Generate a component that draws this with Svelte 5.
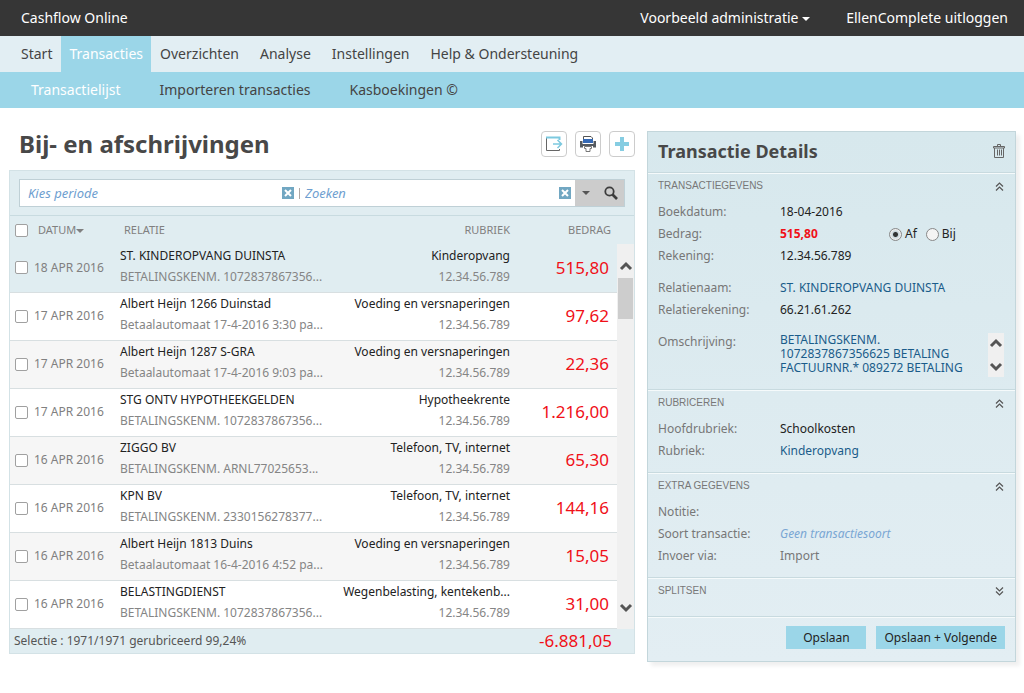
<script>
	let menu = ['Start', 'Transacties', 'Overzichten', 'Analyse', 'Instellingen', 'Help & Ondersteuning'];
	let submenu = ['Transactielijst', 'Importeren transacties', 'Kasboekingen ©'];
	let active = 'Transacties';
	let activeSub = 'Transactielijst';

	let periode = '';
	let zoek = '';
	let richting = 'af';
	let selected = 0;

	let rekening = '12.34.56.789';
	let transacties = [
		{ datum: '18 APR 2016', relatie: 'ST. KINDEROPVANG DUINSTA', tekst: 'BETALINGSKENM. 1072837867356...', rubriek: 'Kinderopvang', bedrag: '515,80' },
		{ datum: '17 APR 2016', relatie: 'Albert Heijn 1266 Duinstad', tekst: 'Betaalautomaat 17-4-2016 3:30 pa...', rubriek: 'Voeding en versnaperingen', bedrag: '97,62' },
		{ datum: '17 APR 2016', relatie: 'Albert Heijn 1287 S-GRA', tekst: 'Betaalautomaat 17-4-2016 9:03 pa...', rubriek: 'Voeding en versnaperingen', bedrag: '22,36' },
		{ datum: '17 APR 2016', relatie: 'STG ONTV HYPOTHEEKGELDEN', tekst: 'BETALINGSKENM. 1072837867356...', rubriek: 'Hypotheekrente', bedrag: '1.216,00' },
		{ datum: '16 APR 2016', relatie: 'ZIGGO BV', tekst: 'BETALINGSKENM. ARNL77025653...', rubriek: 'Telefoon, TV, internet', bedrag: '65,30' },
		{ datum: '16 APR 2016', relatie: 'KPN BV', tekst: 'BETALINGSKENM. 2330156278377...', rubriek: 'Telefoon, TV, internet', bedrag: '144,16' },
		{ datum: '16 APR 2016', relatie: 'Albert Heijn 1813 Duins', tekst: 'Betaalautomaat 16-4-2016 4:52 pa...', rubriek: 'Voeding en versnaperingen', bedrag: '15,05' },
		{ datum: '16 APR 2016', relatie: 'BELASTINGDIENST', tekst: 'BETALINGSKENM. 1072837867356...', rubriek: 'Wegenbelasting, kentekenb...', bedrag: '31,00' }
	];
</script>

<header class="topbar">
	<a href="/">Cashflow Online</a>
	<div class="account">
		<button type="button">Voorbeeld administratie <span class="caret"></span></button>
		<a href="/uitloggen">EllenComplete uitloggen</a>
	</div>
</header>
<nav class="menu">
	{#each menu as item}
		<a href="/" class:active={item === active}>{item}</a>
	{/each}
</nav>
<nav class="submenu">
	{#each submenu as item}
		<a href="/" class:active={item === activeSub}>{item}</a>
	{/each}
</nav>

<main>
	<section class="list">
		<div class="title">
			<h1>Bij- en afschrijvingen</h1>
			<button type="button" class="tool" aria-label="Exporteren">
				<svg width="18" height="18" viewBox="0 0 18 18" fill="none">
					<path d="M1.500 3v12.500H14.500V14" stroke="#666" />
					<path d="M1 2.500H14.500V5" stroke="#7cc9df" stroke-width="2" />
					<path d="M8 9h8M12.500 5 16.500 9 12.500 13" stroke="#7cc9df" stroke-width="1.500" />
				</svg>
			</button>
			<button type="button" class="tool" aria-label="Printen">
				<svg width="18" height="18" viewBox="0 0 18 18">
					<path d="M4.500 5V1.500h7.500l1.500 1.500v2" fill="#fff" stroke="#555" />
					<path d="M1 6h2.500v3h11V6H17v6.500h-3V11H4v1.500H1z" fill="#555a60" />
					<path d="M4 4h10v4H4z" fill="#3569b5" />
					<path d="M5.500 11.500h7v2h-1.500v3h-4v-3H5.500z" fill="#fff" stroke="#777" />
				</svg>
			</button>
			<button type="button" class="tool" aria-label="Toevoegen">
				<svg width="18" height="18" viewBox="0 0 18 18">
					<path d="M7 2h4v5h5v4h-5v5H7v-5H2V7h5z" fill="#86cde2" />
				</svg>
			</button>
		</div>

		<div class="panel">
			<form class="filter" on:submit|preventDefault>
				<div class="search">
					<input class="periode" type="text" bind:value={periode} placeholder="Kies periode" aria-label="Kies periode" />
					<button type="button" class="clear" aria-label="Periode wissen" on:click={() => (periode = '')}>
						<svg width="12" height="12" viewBox="0 0 12 12"><path d="M3 3l6 6M9 3l-6 6" stroke="#fff" stroke-width="2" /></svg>
					</button>
					<span class="sep"></span>
					<input class="zoek" type="text" bind:value={zoek} placeholder="Zoeken" aria-label="Zoeken" />
					<button type="button" class="clear" aria-label="Zoekterm wissen" on:click={() => (zoek = '')}>
						<svg width="12" height="12" viewBox="0 0 12 12"><path d="M3 3l6 6M9 3l-6 6" stroke="#fff" stroke-width="2" /></svg>
					</button>
					<button type="button" class="grey" aria-label="Zoekopties"><span class="caret"></span></button>
					<button type="submit" class="grey wide" aria-label="Zoek">
						<svg width="14" height="14" viewBox="0 0 14 14" fill="none" stroke="#3c3c3c">
							<circle cx="5.500" cy="5.500" r="4.200" stroke-width="1.800" />
							<path d="M8.500 8.500 13 13" stroke-width="2.600" />
						</svg>
					</button>
				</div>
			</form>

			<div class="scroller">
				<table>
					<thead>
						<tr>
							<th class="check"><input type="checkbox" aria-label="Alles selecteren" /></th>
							<th class="datum">DATUM<span class="caret"></span></th>
							<th class="relatie">RELATIE</th>
							<th class="rubriek">RUBRIEK</th>
							<th class="bedrag">BEDRAG</th>
						</tr>
					</thead>
					<tbody>
						{#each transacties as t, i}
							<tr class:selected={i === selected} on:click={() => (selected = i)}>
								<td class="check"><input type="checkbox" aria-label="Selecteer {t.relatie}" /></td>
								<td class="datum">{t.datum}</td>
								<td class="relatie"><div>{t.relatie}</div><div class="sub">{t.tekst}</div></td>
								<td class="rubriek"><div>{t.rubriek}</div><div class="sub">{rekening}</div></td>
								<td class="bedrag">{t.bedrag}</td>
							</tr>
						{/each}
					</tbody>
				</table>
				<div class="scrollbar">
					<svg width="14" height="10" viewBox="0 0 14 10"><path d="M2 8l5-5 5 5" fill="none" stroke="#555" stroke-width="3" /></svg>
					<div class="thumb"></div>
					<svg width="14" height="10" viewBox="0 0 14 10"><path d="M2 2l5 5 5-5" fill="none" stroke="#555" stroke-width="3" /></svg>
				</div>
			</div>

			<div class="totals">
				<span>Selectie : 1971/1971 gerubriceerd 99,24%</span>
				<strong>-6.881,05</strong>
			</div>
		</div>
	</section>

	<aside class="details">
		<div class="head">
			<h2>Transactie Details</h2>
			<button type="button" class="plain" aria-label="Verwijderen">
				<svg width="12" height="14" viewBox="0 0 12 14" fill="none" stroke="#666">
					<path d="M4.500 2V.5h3V2M.5 2.500h11v1.500H.5zM1.500 4v9.500h9V4M4.500 5.500v6M6.500 5.500v6M8.500 5.500v6" />
				</svg>
			</button>
		</div>

		<section>
			<h3>TRANSACTIEGEVENS
				<button type="button" class="plain" aria-label="Inklappen"><svg width="9" height="9" viewBox="0 0 9 9"><path d="M1 4.500 4.500 1 8 4.500M1 8.500 4.500 5 8 8.500" fill="none" stroke="#555" stroke-width="1.200" /></svg></button>
			</h3>
			<dl>
				<dt>Boekdatum:</dt><dd>18-04-2016</dd>
				<dt>Bedrag:</dt>
				<dd class="amount">
					<span class="red">515,80</span>
					<label><input type="radio" value="af" bind:group={richting} />Af</label>
					<label><input type="radio" value="bij" bind:group={richting} />Bij</label>
				</dd>
				<dt>Rekening:</dt><dd>12.34.56.789</dd>
			</dl>
			<dl>
				<dt>Relatienaam:</dt><dd class="blue">ST. KINDEROPVANG DUINSTA</dd>
				<dt>Relatierekening:</dt><dd>66.21.61.262</dd>
			</dl>
			<dl>
				<dt>Omschrijving:</dt>
				<dd class="blue memo">
					<div>BETALINGSKENM.<br />1072837867356625 BETALING<br />FACTUURNR.* 089272 BETALING</div>
					<div class="spin">
						<svg width="14" height="10" viewBox="0 0 14 10"><path d="M2 8l5-5 5 5" fill="none" stroke="#555" stroke-width="3" /></svg>
						<svg width="14" height="10" viewBox="0 0 14 10"><path d="M2 2l5 5 5-5" fill="none" stroke="#555" stroke-width="3" /></svg>
					</div>
				</dd>
			</dl>
		</section>

		<section>
			<h3>RUBRICEREN
				<button type="button" class="plain" aria-label="Inklappen"><svg width="9" height="9" viewBox="0 0 9 9"><path d="M1 4.500 4.500 1 8 4.500M1 8.500 4.500 5 8 8.500" fill="none" stroke="#555" stroke-width="1.200" /></svg></button>
			</h3>
			<dl>
				<dt>Hoofdrubriek:</dt><dd>Schoolkosten</dd>
				<dt>Rubriek:</dt><dd class="blue">Kinderopvang</dd>
			</dl>
		</section>

		<section>
			<h3>EXTRA GEGEVENS
				<button type="button" class="plain" aria-label="Inklappen"><svg width="9" height="9" viewBox="0 0 9 9"><path d="M1 4.500 4.500 1 8 4.500M1 8.500 4.500 5 8 8.500" fill="none" stroke="#555" stroke-width="1.200" /></svg></button>
			</h3>
			<dl>
				<dt>Notitie:</dt><dd></dd>
				<dt>Soort transactie:</dt><dd class="empty">Geen transactiesoort</dd>
				<dt>Invoer via:</dt><dd class="muted">Import</dd>
			</dl>
		</section>

		<section class="closed">
			<h3>SPLITSEN
				<button type="button" class="plain" aria-label="Uitklappen"><svg width="9" height="9" viewBox="0 0 9 9"><path d="M1 .5 4.500 4 8 .5M1 4.500 4.500 8 8 4.500" fill="none" stroke="#555" stroke-width="1.200" /></svg></button>
			</h3>
		</section>

		<div class="actions">
			<button type="button">Opslaan</button>
			<button type="button">Opslaan + Volgende</button>
		</div>
	</aside>
</main>

<style>
	:global(body) {
		background: #fff;
		color: #222;
		font: 12px/20px 'Noto Sans', 'Open Sans', sans-serif;
	}
	a {
		color: inherit;
		text-decoration: none;
	}
	button {
		border: 0;
		padding: 0;
		background: none;
		color: inherit;
		font: inherit;
		cursor: pointer;
	}
	svg {
		display: block;
	}
	.caret {
		display: inline-block;
		border: 4px solid transparent;
		border-top-color: currentColor;
		border-bottom: 0;
		vertical-align: middle;
	}
	.topbar {
		display: flex;
		align-items: center;
		justify-content: space-between;
		height: 36px;
		padding: 0 16px 0 21px;
		background: #363636;
		color: #fff;
		font-size: 14px;
	}
	.account {
		display: flex;
		gap: 36px;
	}
	.menu,
	.submenu {
		display: flex;
		height: 36px;
		color: #444;
		font-size: 14px;
		line-height: 36px;
	}
	.menu {
		gap: 5px;
		padding-left: 13px;
		background: #e2eef3;
	}
	.menu a {
		padding: 0 8px;
	}
	.submenu {
		gap: 39px;
		padding-left: 31px;
		background: #9bd6e8;
	}
	.menu .active,
	.submenu .active {
		background: #9bd6e8;
		color: #fff;
	}
	.menu .active {
		margin: 0 -4px;
	}
	main {
		display: grid;
		grid-template-columns: 626fr 369fr;
		gap: 12px;
		align-items: start;
		padding: 23px 8px 24px 9px;
	}
	.title {
		display: flex;
		align-items: center;
		gap: 8px;
		height: 26px;
		margin-bottom: 13px;
	}
	h1 {
		flex: 1;
		margin: 0 0 0 10px;
		color: #484848;
		font-size: 24px;
		line-height: 26px;
	}
	.tool {
		display: grid;
		place-items: center;
		width: 26px;
		height: 26px;
		border: 1px solid #ccc;
		border-radius: 4px;
		background: #fff;
	}
	.panel {
		border: 1px solid #d3e2e6;
		background: #e0edf1;
	}
	.filter {
		padding: 8px 9px;
		border-bottom: 1px solid #c8dbe0;
	}
	.search {
		display: flex;
		align-items: center;
		height: 26px;
		border: 1px solid #bfd0d6;
		background: #fff;
	}
	.search input {
		box-sizing: border-box;
		min-width: 0;
		height: 24px;
		border: 0;
		padding: 0 0 0 8px;
		outline: none;
		background: none;
		font: italic 13px 'Noto Sans', 'Open Sans', sans-serif;
	}
	.search .periode,
	.search .zoek {
		flex: 1;
	}
	.search .zoek {
		padding-left: 5px;
	}
	.search input::placeholder {
		color: #6f9fd0;
		opacity: 1;
	}
	.clear {
		width: 12px;
		height: 12px;
		background: #71a7c2;
	}
	.sep {
		width: 1px;
		height: 11px;
		margin-left: 5px;
		background: #b0a8a4;
	}
	.grey {
		display: grid;
		place-items: center;
		width: 22px;
		height: 26px;
		background: #ccc;
		color: #555;
	}
	.clear + .grey {
		margin-left: 4px;
	}
	.wide {
		width: 27px;
	}
	.scroller {
		position: relative;
	}
	table {
		width: 100%;
		border-collapse: collapse;
		table-layout: fixed;
	}
	th,
	td {
		box-sizing: border-box;
		padding: 0;
		text-align: left;
		white-space: nowrap;
	}
	th {
		height: 28px;
		color: #808080;
		font-size: 11px;
		font-weight: normal;
	}
	td {
		height: 48px;
		border-bottom: 1px solid #d8dfe1;
	}
	tbody tr {
		background: #fff;
	}
	tbody tr:nth-child(odd) {
		background: #f6f6f6;
	}
	tbody tr.selected {
		background: #e0edf1;
	}
	.check {
		width: 24px;
		padding-left: 5px;
	}
	.datum {
		width: 86px;
	}
	.relatie {
		width: 214px;
	}
	.bedrag {
		width: 124px;
		padding-right: 25px;
	}
	th.datum,
	th.relatie {
		padding-left: 4px;
	}
	.rubriek,
	.bedrag {
		text-align: right;
	}
	th.bedrag {
		padding-right: 23px;
	}
	td.relatie,
	td.rubriek {
		padding-bottom: 4px;
		line-height: 21px;
	}
	td.datum {
		color: #808080;
		font-size: 12px;
	}
	td.bedrag {
		color: #f01018;
		font-size: 17px;
	}
	.sub {
		color: #858585;
	}
	input[type='checkbox'] {
		appearance: none;
		display: block;
		box-sizing: border-box;
		width: 13px;
		height: 13px;
		margin: 0;
		border: 1px solid #a0a0a0;
		border-radius: 2px;
		background: #fff;
	}
	.scrollbar {
		position: absolute;
		top: 28px;
		right: 0;
		bottom: 0;
		display: flex;
		flex-direction: column;
		align-items: center;
		box-sizing: border-box;
		width: 17px;
		padding: 17px 0 16px;
		background: #f0f0f0;
	}
	.thumb {
		width: 15px;
		height: 41px;
		margin: 7px 0 auto;
		background: #cdcdcd;
	}
	.totals {
		display: flex;
		align-items: center;
		justify-content: space-between;
		height: 24px;
		padding: 0 22px 0 4px;
		color: #555;
	}
	.totals strong {
		color: #f01018;
		font-size: 17px;
		font-weight: normal;
	}
	.details {
		border: 1px solid #c3d6db;
		background: linear-gradient(#d7e8ed, #e3eef3);
		box-shadow: 4px 4px 4px #f0f0f0;
	}
	.head {
		display: flex;
		align-items: center;
		justify-content: space-between;
		height: 38px;
		padding: 0 10px 2px;
	}
	h2 {
		margin: 0;
		color: #484848;
		font-size: 18px;
	}
	.details section {
		padding: 3px 10px 10px;
		border-top: 1px solid #c8dadf;
		box-shadow: inset 0 1px #f5fafb;
	}
	.details .closed {
		padding-bottom: 15px;
	}
	h3 {
		display: flex;
		align-items: center;
		justify-content: space-between;
		margin: 0;
		padding-right: 1px;
		color: #777;
		font: 10px/20px 'Liberation Sans', Arial, sans-serif;
	}
	dl {
		display: grid;
		grid-template-columns: 122px 1fr;
		grid-auto-rows: minmax(22px, auto);
		margin: 5px 0 0;
		line-height: 22px;
	}
	dl + dl {
		margin-top: 10px;
	}
	dt,
	.muted {
		color: #777;
	}
	dd {
		margin: 0;
	}
	.amount {
		display: flex;
		gap: 9px;
	}
	.red {
		flex: 0 0 100px;
		color: #f01018;
		font-weight: bold;
	}
	label {
		display: flex;
		align-items: center;
		gap: 3px;
	}
	input[type='radio'] {
		appearance: none;
		width: 13px;
		height: 13px;
		box-sizing: border-box;
		margin: 0;
		border: 1px solid #888;
		border-radius: 50%;
		background: #f4f4f4;
	}
	input[type='radio']:checked {
		background: radial-gradient(circle, #333 2px, #c8d4da 3px, #eee 5px);
	}
	.blue {
		color: #1a5c8a;
	}
	.memo {
		display: flex;
		justify-content: space-between;
		padding: 2px 0;
		line-height: 14px;
	}
	.spin {
		display: flex;
		flex-direction: column;
		justify-content: space-between;
		height: 34px;
		margin-right: 1px;
		padding: 5px 1px;
		background: #f0f0f0;
	}
	.empty {
		color: #7aa7d4;
		font-style: italic;
	}
	.actions {
		display: flex;
		justify-content: flex-end;
		gap: 10px;
		padding: 9px 10px 12px;
		border-top: 1px solid #c8dadf;
		box-shadow: inset 0 1px #f5fafb;
	}
	.actions button {
		min-width: 80px;
		height: 23px;
		padding: 0 8px;
		background: #9bd6e8;
		color: #222;
	}
</style>
